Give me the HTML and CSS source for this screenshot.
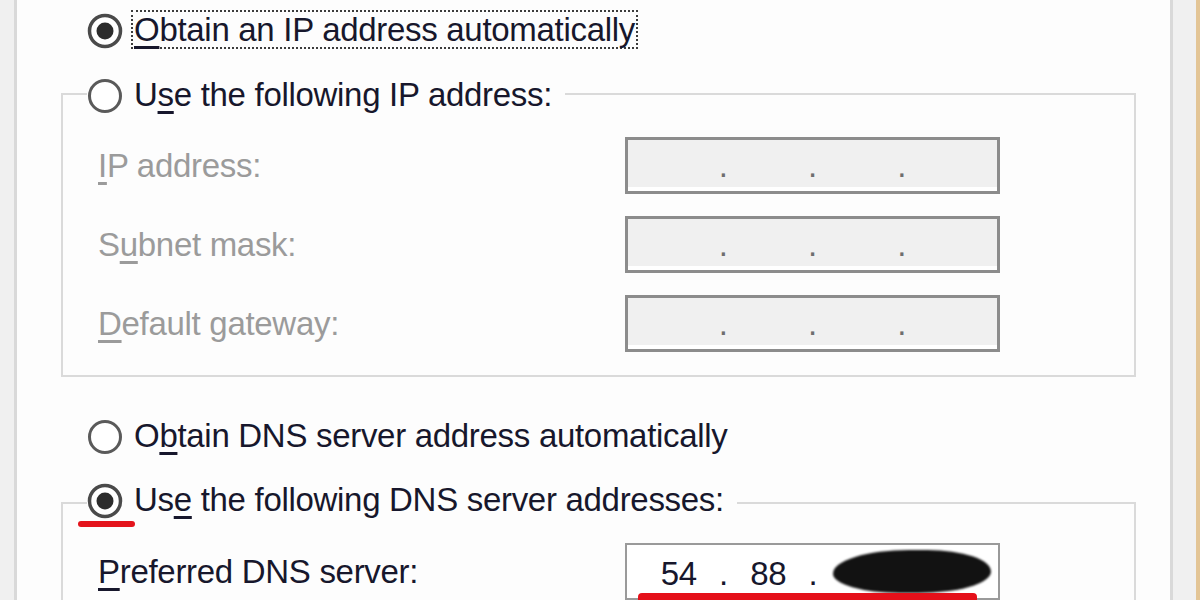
FILE: index.html
```html
<!DOCTYPE html>
<html lang="en">
<head>
<meta charset="utf-8">
<title>Internet Protocol Version 4 (TCP/IPv4) Properties</title>
<link rel="stylesheet" href="styles.css">
</head>
<body>
<div class="window">
  <div class="edge-left"></div>
  <main class="panel">
    <div class="choice standalone">
      <span class="radio">
        <svg width="36" height="36" viewBox="0 0 36 36"><circle cx="18" cy="18" r="15.5" fill="#fff" stroke="#4a4a4a" stroke-width="3.5"/><circle cx="18" cy="18" r="8.5" fill="#2c2c2c"/></svg>
      </span>
      <span class="label focus"><u>O</u>btain an IP address automatically</span>
    </div>

    <fieldset class="group">
      <legend>
        <span class="choice">
          <span class="radio">
            <svg width="36" height="36" viewBox="0 0 36 36"><circle cx="18" cy="18" r="15.5" fill="#fff" stroke="#5a5a5a" stroke-width="3"/></svg>
          </span>
          <span class="label">U<u>s</u>e the following IP address:</span>
        </span>
      </legend>
      <div class="group-body">
        <span class="field-label"><u>I</u>P address:</span>
        <div class="ip-box disabled"><span class="octet"></span><span class="dot">.</span><span class="octet"></span><span class="dot">.</span><span class="octet"></span><span class="dot">.</span><span class="octet"></span></div>
        <span class="field-label">S<u>u</u>bnet mask:</span>
        <div class="ip-box disabled"><span class="octet"></span><span class="dot">.</span><span class="octet"></span><span class="dot">.</span><span class="octet"></span><span class="dot">.</span><span class="octet"></span></div>
        <span class="field-label"><u>D</u>efault gateway:</span>
        <div class="ip-box disabled"><span class="octet"></span><span class="dot">.</span><span class="octet"></span><span class="dot">.</span><span class="octet"></span><span class="dot">.</span><span class="octet"></span></div>
      </div>
    </fieldset>

    <div class="choice standalone dns-auto">
      <span class="radio">
        <svg width="36" height="36" viewBox="0 0 36 36"><circle cx="18" cy="18" r="15.5" fill="#fff" stroke="#5a5a5a" stroke-width="3"/></svg>
      </span>
      <span class="label">O<u>b</u>tain DNS server address automatically</span>
    </div>

    <fieldset class="group dns">
      <legend>
        <span class="choice">
          <span class="radio marked">
            <svg width="36" height="36" viewBox="0 0 36 36"><circle cx="18" cy="18" r="15.5" fill="#fff" stroke="#4a4a4a" stroke-width="3.5"/><circle cx="18" cy="18" r="8.5" fill="#2c2c2c"/></svg>
          </span>
          <span class="label">Us<u>e</u> the following DNS server addresses:</span>
        </span>
      </legend>
      <div class="group-body">
        <span class="field-label active"><u>P</u>referred DNS server:</span>
        <div class="ip-box active"><span class="octet">54</span><span class="dot">.</span><span class="octet">88</span><span class="dot">.</span><span class="octet"></span><span class="dot">.</span><span class="octet"></span><span class="scribble"></span><span class="redline"></span></div>
      </div>
    </fieldset>
  </main>
  <div class="edge-right"></div>
</div>
</body>
</html>
```

FILE: styles.css
```css
* {
  box-sizing: border-box;
}

html,
body {
  margin: 0;
  padding: 0;
}

body {
  width: 1200px;
  height: 600px;
  overflow: hidden;
  background: #fdfdfd;
  font-family: "Liberation Sans", Arial, sans-serif;
  font-size: 33px;
  letter-spacing: -0.3px;
  color: #17172c;
}

u {
  text-decoration-thickness: 3px;
  text-underline-offset: 5px;
}

.window {
  display: flex;
  height: 600px;
}

.edge-left {
  flex: none;
  width: 17px;
  background: #f0f0f0;
  border-right: 3px solid #d9d9d9;
}

.panel {
  flex: 1;
  padding: 9px 34px 0 44px;
  background: #fdfdfd;
}

.edge-right {
  flex: none;
  width: 30px;
  background: #f0f0f0;
  border-left: 3px solid #d9d9d9;
  border-right: 4px solid #e3c596;
}

.choice {
  display: flex;
  align-items: center;
  height: 40px;
}

.standalone {
  margin-left: 26px;
}

.radio {
  position: relative;
  flex: none;
  width: 36px;
  height: 36px;
  margin-right: 8px;
  margin-top: 4px;
}

.radio svg {
  display: block;
}

.radio.marked::after {
  content: "";
  position: absolute;
  left: -9px;
  top: 38px;
  width: 57px;
  height: 6px;
  border-radius: 3px;
  background: #e4141c;
}

.label {
  display: block;
  height: 39px;
  padding: 0 1px;
  border: 2px solid transparent;
  line-height: 35px;
  white-space: nowrap;
}

.label.focus {
  border: 2px dotted #3c3c3c;
}

.group {
  margin: 25px 0 0;
  padding: 0;
  min-width: 0;
  border: 2px solid #dadada;
}

.group legend {
  margin-left: 24px;
  padding: 0 10px 0 0;
}

.group-body {
  display: grid;
  grid-template-columns: 527px 375px;
  row-gap: 22px;
  align-items: center;
  padding: 23px 0 23px 35px;
}

.field-label {
  color: #9b9b9b;
  white-space: nowrap;
}

.field-label.active {
  color: #17172c;
}

.dns-auto {
  margin-top: 38px;
}

.dns {
  margin-top: 24px;
}

.dns legend {
  padding-bottom: 8px;
}

.dns .group-body {
  padding-top: 16px;
}

.ip-box {
  position: relative;
  display: flex;
  align-items: flex-end;
  height: 57px;
  line-height: 1;
}

.ip-box.disabled {
  padding: 0 12px 9px 12px;
  border: 3px solid #8c8c8c;
  background: #f0f0f0;
  box-shadow: inset 0 -4px 0 #fff;
}

.ip-box.disabled .dot {
  color: #6e6e6e;
}

.ip-box.active {
  padding: 0 12px 8px 13px;
  border: 2px solid #9a9a9a;
  background: #fff;
}

.octet {
  width: 78px;
  text-align: center;
}

.dot {
  width: 12px;
  text-align: center;
}

.scribble {
  position: absolute;
  left: 206px;
  top: 5px;
  width: 158px;
  height: 43px;
  border-radius: 48% 40% 46% 42% / 55% 50% 50% 45%;
  background: #121212;
  filter: blur(1.2px);
}

.redline {
  position: absolute;
  left: 11px;
  top: 48px;
  width: 339px;
  height: 14px;
  border-radius: 4px;
  background: #e5101a;
}
```
